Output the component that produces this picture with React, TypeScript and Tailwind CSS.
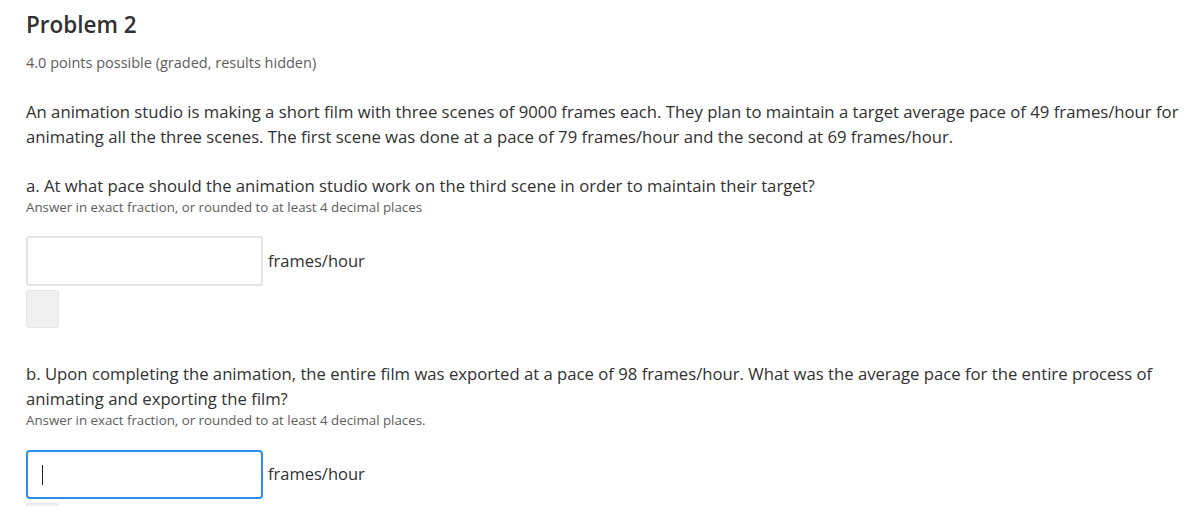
import React from "react";

export default function App() {
  return (
    <div className="w-[1202px] h-[506px] overflow-hidden bg-white text-[#313131]" style={{ fontFamily: '"Open Sans", "Noto Sans", sans-serif' }}>
      <div className="pl-[26px] pr-4">
        <h2 className="pt-[10px] text-[22.5px] leading-[30px] font-semibold text-[#313131]">Problem 2</h2>
        <div className="mt-[13px] text-[14.5px] leading-[20px] text-[#5e5e5e]">4.0 points possible (graded, results hidden)</div>
        <p className="mt-[26px] text-[16.7px] leading-[25px]">
          An animation studio is making a short film with three scenes of 9000 frames each. They plan to maintain a target average pace of 49 frames/hour for animating all the three scenes. The first scene was done at a pace of 79 frames/hour and the second at 69 frames/hour.
        </p>
        <p className="mt-[24px] text-[16.7px] leading-[25px]">a. At what pace should the animation studio work on the third scene in order to maintain their target?</p>
        <div className="text-[13.3px] leading-[18px] text-[#5e5e5e]">Answer in exact fraction, or rounded to at least 4 decimal places</div>
        <div className="mt-[20px] flex items-center">
          <div className="w-[237px] h-[50px] border-2 border-[#e4e4e4] rounded-[3px] bg-white"></div>
          <span className="ml-[5px] text-[16.5px]">frames/hour</span>
        </div>
        <div className="mt-[4px] w-[33px] h-[38px] rounded-[3px] bg-[#f0f0f0] border border-[#e6e6e6]"></div>
        <p className="mt-[33px] text-[16.7px] leading-[25px]">
          b. Upon completing the animation, the entire film was exported at a pace of 98 frames/hour. What was the average pace for the entire process of animating and exporting the film?
        </p>
        <div className="text-[13.3px] leading-[18px] text-[#5e5e5e]">Answer in exact fraction, or rounded to at least 4 decimal places.</div>
        <div className="mt-[21px] flex items-center">
          <div className="relative w-[237px] h-[49px] border-2 border-[#2d8ced] rounded-[4px] bg-white">
            <div className="absolute left-[14px] top-[13px] w-[1px] h-[20px] bg-[#222]"></div>
          </div>
          <span className="ml-[5px] text-[16.5px]">frames/hour</span>
        </div>
        <div className="mt-[4px] w-[33px] h-[38px] rounded-[3px] bg-[#f0f0f0] border border-[#e6e6e6]"></div>
      </div>
    </div>
  );
}
